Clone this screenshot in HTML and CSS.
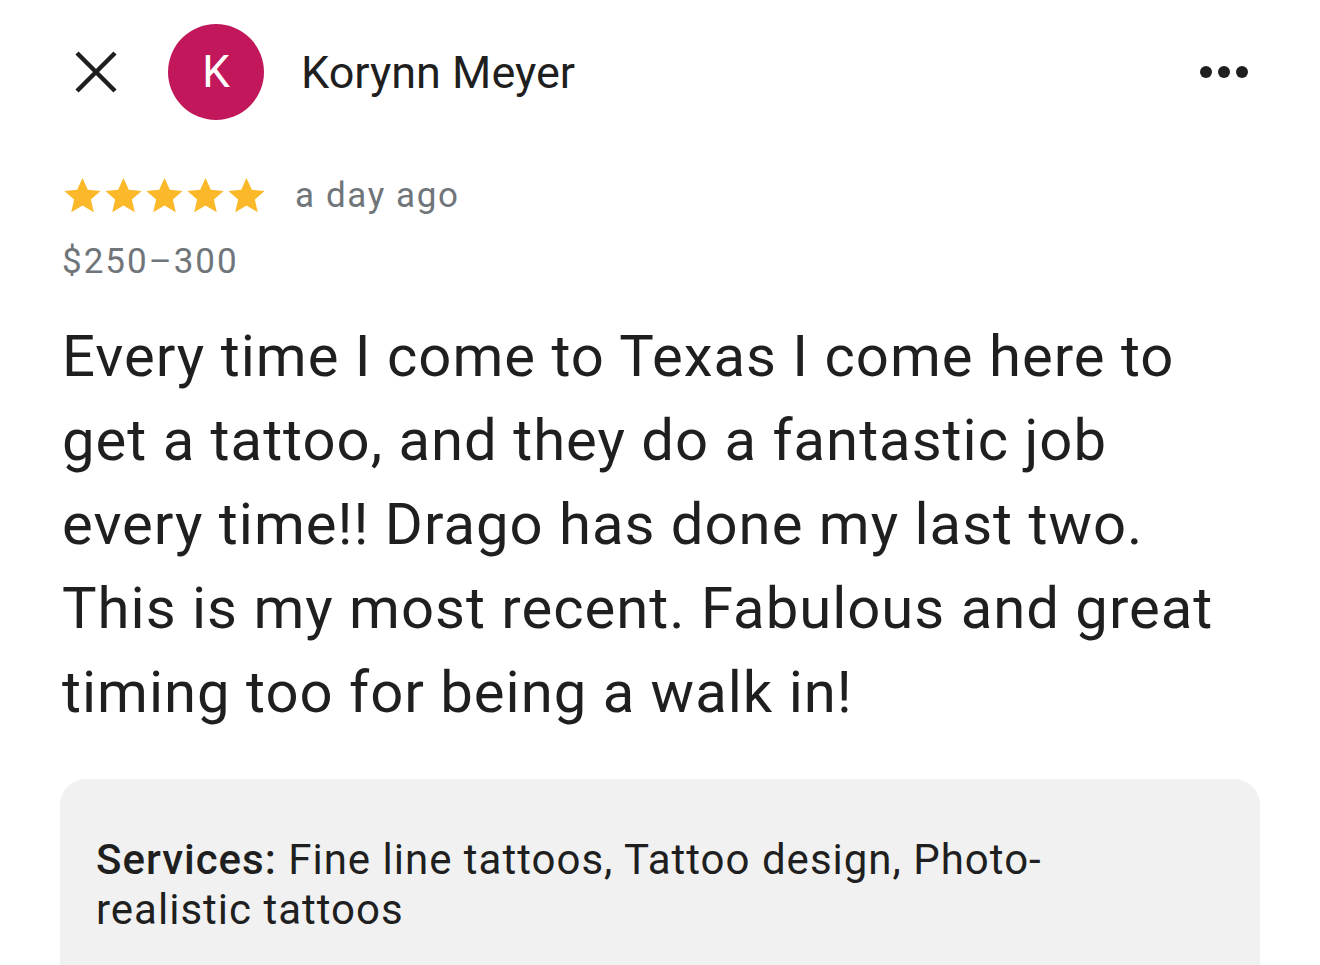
FILE: index.html
```html
<!DOCTYPE html>
<html lang="en">

<head>
    <meta charset="UTF-8">
    <meta name="viewport" content="width=device-width, initial-scale=1.0">
    <title>Review</title>
    <link rel="stylesheet" href="styles.css">
</head>

<body>
    <div class="header">
        <button class="close" aria-label="Close">
            <svg width="44" height="44" viewBox="0 0 44 44">
                <path d="M3 3 L41 41 M41 3 L3 41" stroke="#1f1f1f" stroke-width="4.5" fill="none" />
            </svg>
        </button>
        <div class="avatar">K</div>
        <div class="name">Korynn Meyer</div>
        <div class="more">
            <span></span><span></span><span></span>
        </div>
    </div>

    <div class="content">
        <div class="meta">
            <div class="stars">
                <svg viewBox="0 0 24 24"><path d="M12 1.8l3.1 6.9 7.5.7-5.7 5 1.7 7.4L12 17.9l-6.6 3.9 1.7-7.4-5.7-5 7.5-.7z" /></svg>
                <svg viewBox="0 0 24 24"><path d="M12 1.8l3.1 6.9 7.5.7-5.7 5 1.7 7.4L12 17.9l-6.6 3.9 1.7-7.4-5.7-5 7.5-.7z" /></svg>
                <svg viewBox="0 0 24 24"><path d="M12 1.8l3.1 6.9 7.5.7-5.7 5 1.7 7.4L12 17.9l-6.6 3.9 1.7-7.4-5.7-5 7.5-.7z" /></svg>
                <svg viewBox="0 0 24 24"><path d="M12 1.8l3.1 6.9 7.5.7-5.7 5 1.7 7.4L12 17.9l-6.6 3.9 1.7-7.4-5.7-5 7.5-.7z" /></svg>
                <svg viewBox="0 0 24 24"><path d="M12 1.8l3.1 6.9 7.5.7-5.7 5 1.7 7.4L12 17.9l-6.6 3.9 1.7-7.4-5.7-5 7.5-.7z" /></svg>
            </div>
            <span class="when">a day ago</span>
        </div>
        <div class="price">$250–300</div>

        <p class="review">
            Every time I come to Texas I come here to get a tattoo, and they do a fantastic job every time!! Drago has done my last two. This is my most recent. Fabulous and great timing too for being a walk in!
        </p>

        <div class="services">
            <p><b>Services:</b> <span>Fine line tattoos, Tattoo design, Photo-</span><br><span>realistic tattoos</span></p>
        </div>
    </div>
</body>

</html>
```

FILE: styles.css
```css
* {
    margin: 0;
    padding: 0;
    box-sizing: border-box;
}

body {
    font-family: "Roboto", "Liberation Sans", sans-serif;
    background: #fff;
    color: #1f1f1f;
    width: 1320px;
    height: 965px;
    overflow: hidden;
}

.header {
    display: flex;
    align-items: center;
    height: 144px;
    padding: 0 72px 0 74px;
}

.close {
    width: 44px;
    height: 44px;
    border: none;
    background: none;
    display: flex;
}

.avatar {
    width: 96px;
    height: 96px;
    border-radius: 50%;
    background: #c2185b;
    color: #fff;
    font-size: 44px;
    display: flex;
    align-items: center;
    justify-content: center;
    margin-left: 50px;
}

.name {
    font-size: 45px;
    margin-left: 37px;
    flex: 1;
}

.more {
    display: flex;
    gap: 6px;
}

.more span {
    width: 12px;
    height: 12px;
    border-radius: 50%;
    background: #1f1f1f;
}

.content {
    padding: 0 60px 0 62px;
}

.meta {
    display: flex;
    align-items: center;
    height: 46px;
    margin-top: 28px;
}

.stars {
    display: flex;
}

.stars svg {
    width: 41px;
    height: 41px;
    fill: #fbb829;
}

.when {
    font-size: 35px;
    letter-spacing: 1.6px;
    color: #70757a;
    margin-left: 28px;
}

.price {
    font-size: 35px;
    letter-spacing: 2px;
    color: #70757a;
    margin-top: 22px;
    line-height: 44px;
}

.review {
    font-size: 58px;
    line-height: 84px;
    letter-spacing: 1px;
    margin-top: 30px;
    padding-right: 30px;
}

.services {
    margin-top: 45px;
    margin-left: -2px;
    background: #f1f1f1;
    border-radius: 26px;
    padding: 56px 36px 60px;
    min-height: 300px;
}

.services p {
    font-size: 42px;
    line-height: 50px;
    letter-spacing: 1px;
}

.services b {
    font-weight: 500;
}
```
